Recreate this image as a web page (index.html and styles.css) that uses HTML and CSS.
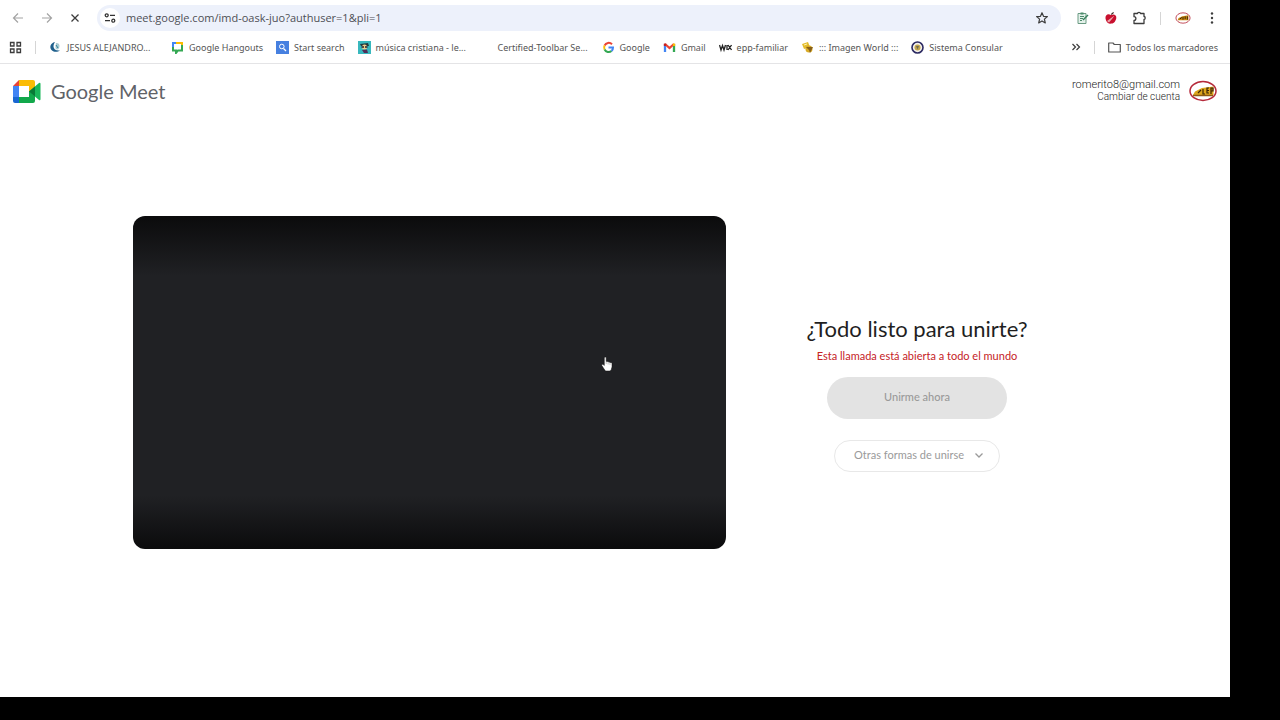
FILE: index.html
```html
<!DOCTYPE html>
<html lang="es">
<head>
    <meta charset="UTF-8">
    <meta name="viewport" content="width=device-width, initial-scale=1.0">
    <title>Google Meet</title>
    <link rel="stylesheet" href="styles.css">
</head>
<body>
    <div class="window">
        <div class="toolbar">
            <div class="nav-buttons">
                <button class="icon-btn faded" aria-label="Atrás">
                    <svg width="12" height="12" viewBox="0 0 12 12"><path d="M11 6H1.5M6 1.5L1.5 6L6 10.500" fill="none" stroke="currentColor" stroke-width="1.2"/></svg>
                </button>
                <button class="icon-btn faded" aria-label="Adelante">
                    <svg width="12" height="12" viewBox="0 0 12 12"><path d="M1 6H10.500M6 1.500L10.500 6L6 10.500" fill="none" stroke="currentColor" stroke-width="1.2"/></svg>
                </button>
                <button class="icon-btn" aria-label="Detener">
                    <svg width="10" height="10" viewBox="0 0 10 10"><path d="M1.500 1.500L8.500 8.500M8.500 1.500L1.500 8.500" fill="none" stroke="currentColor" stroke-width="1.300"/></svg>
                </button>
            </div>
            <div class="address">
                <button class="site-info" aria-label="Información del sitio">
                    <svg width="12" height="12" viewBox="0 0 12 12" fill="none" stroke="#333" stroke-width="1.300"><circle cx="2.700" cy="3.300" r="1.500"/><path d="M6 3.300H11M1 8.700H6"/><circle cx="9.300" cy="8.700" r="1.500"/></svg>
                </button>
                <input class="url" type="text" aria-label="Dirección" value="meet.google.com/imd-oask-juo?authuser=1&amp;pli=1">
                <button class="icon-btn" aria-label="Añadir a marcadores">
                    <svg width="14" height="14" viewBox="0 0 14 14"><path d="M7 1.700L8.500 5.300L12.400 5.600L9.400 8.100L10.300 11.900L7 9.900L3.700 11.900L4.600 8.100L1.600 5.600L5.500 5.300Z" fill="none" stroke="currentColor" stroke-width="1.200" stroke-linejoin="round"/></svg>
                </button>
            </div>
            <div class="extensions">
                <button class="icon-btn" aria-label="Lista">
                    <svg width="14" height="14" viewBox="0 0 14 14" fill="none"><path d="M2 2.500H10V12.500H2Z" fill="#e4f1ea" stroke="#6b9b83"/><path d="M4.500 1.500H7.500V3.500H4.500Z" fill="#4b8b6b"/><path d="M4 5.500H8M4 7.500H7M4 9.500H6" stroke="#4b8b6b"/><path d="M7 9L12 4" stroke="#39805c" stroke-width="1.500"/></svg>
                </button>
                <button class="icon-btn" aria-label="Manzana">
                    <svg width="14" height="14" viewBox="0 0 14 14"><path d="M7 4C4 2 1 4 1.500 7.500C2 11 4.500 13.500 7 12.500C10 13 12 9.500 12.300 7C12.600 4 10 2.500 7 4Z" fill="#c8102e"/><path d="M7 4Q7 1.500 10 1Q10 3 7 4Z" fill="#3d2b25"/><path d="M3 10L10.500 4.500L8 8L5 11.500Z" fill="#e9a5aa"/></svg>
                </button>
                <button class="icon-btn" aria-label="Extensiones">
                    <svg width="14" height="14" viewBox="0 0 14 14"><path d="M2 2.500H5.500A1.500 1.200 0 0 1 8.500 2.500H12V5.500A1.200 1.500 0 0 1 12 8.500V12.500H2V9.500A1.700 1.700 0 0 0 2 5.700Z" fill="none" stroke="currentColor" stroke-width="1.300" stroke-linejoin="round"/></svg>
                </button>
                <span class="divider"></span>
                <button class="icon-btn" aria-label="Perfil">
                    <svg width="16" height="12" viewBox="0 0 28 22"><ellipse cx="14" cy="11" rx="13" ry="9.500" fill="#fff" stroke="#b5293a" stroke-width="1.500"/><path d="M4 15L6 11L13 8L24 6V15Z" fill="#c98a12"/><path d="M8 13L12 10M14 9V14M18 8V13M22 8V14" stroke="#3a2406" stroke-width="1.800"/></svg>
                </button>
                <button class="icon-btn" aria-label="Menú">
                    <svg width="14" height="14" viewBox="0 0 14 14" fill="currentColor"><circle cx="7" cy="2.500" r="1.200"/><circle cx="7" cy="7" r="1.200"/><circle cx="7" cy="11.500" r="1.200"/></svg>
                </button>
            </div>
        </div>

        <nav class="bookmarks">
            <button class="icon-btn" aria-label="Aplicaciones">
                <svg width="13" height="13" viewBox="0 0 13 13" fill="none" stroke="currentColor" stroke-width="1.300"><path d="M1.500 1.500H5V5H1.500ZM8 1.500H11.500V5H8ZM1.500 8H5V11.500H1.500ZM8 8H11.500V11.500H8Z"/></svg>
            </button>
            <span class="divider"></span>
            <ul class="bookmark-list">
                <li><a class="bookmark" href="#">
                    <svg class="favicon" viewBox="0 0 13 13"><path d="M6 1C1 2 0 7 3 9.500C5 11.500 9 11 11 9.500C7 10 4.500 8 4.500 5.500C4.500 3 5.500 2 6 1Z" fill="#1e5f8c"/><path d="M7 2C10.500 1.500 11.500 5 9.500 8C8 9 6 8 6.500 6Z" fill="#a9cbd2"/><path d="M7 4L9 7" stroke="#2d7f9a"/></svg>
                    <span class="cut">JESUS ALEJANDRO...</span></a></li>
                <li><a class="bookmark" href="#">
                    <svg class="favicon" viewBox="0 0 13 13" fill="none" stroke-width="2"><path d="M2 10V2H6" stroke="#4285f4"/><path d="M5 2H11V5" stroke="#fbbc04"/><path d="M11 4V9.500H7L5 12V9.500H2V6" stroke="#34a853"/><path d="M2 6V2" stroke="#4285f4"/></svg>
                    <span>Google Hangouts</span></a></li>
                <li><a class="bookmark" href="#">
                    <svg class="favicon" viewBox="0 0 13 13"><rect width="13" height="13" fill="#4680e0"/><circle cx="5.800" cy="5.500" r="2.300" fill="none" stroke="#fff"/><path d="M7.500 7.500L10 10" stroke="#fff" stroke-width="1.300"/></svg>
                    <span>Start search</span></a></li>
                <li><a class="bookmark" href="#">
                    <svg class="favicon" viewBox="0 0 13 13"><rect width="13" height="13" fill="#38b8be"/><path d="M2 3L10 2L11 5L3 5Z" fill="#253a3e"/><circle cx="6.500" cy="6" r="2.500" fill="#f0cf8b"/><path d="M3.500 6H6M7 6H9.500" stroke="#26202d" stroke-width="1.500"/><path d="M4 9L9 8.500L10 12H6Z" fill="#512e58"/></svg>
                    <span class="cut">música cristiana - le...</span></a></li>
                <li><a class="bookmark" href="#">
                    <span class="favicon"></span>
                    <span class="cut">Certified-Toolbar Se...</span></a></li>
                <li><a class="bookmark" href="#">
                    <svg class="favicon" viewBox="0 0 13 13" fill="none" stroke-width="2"><path d="M10 3.300A4.500 4.500 0 0 0 2.600 4.500" stroke="#ea4335"/><path d="M2.600 4.500A4.500 4.500 0 0 0 2.600 8.500" stroke="#fbbc04"/><path d="M2.600 8.500A4.500 4.500 0 0 0 9.500 10" stroke="#34a853"/><path d="M9.500 10A4.500 4.500 0 0 0 11 6.500H6.500" stroke="#4285f4"/></svg>
                    <span>Google</span></a></li>
                <li><a class="bookmark" href="#">
                    <svg class="favicon" viewBox="0 0 13 13" fill="none" stroke-width="2.300"><path d="M2 11V3" stroke="#4285f4"/><path d="M11 11V3" stroke="#34a853"/><path d="M2 3L6.500 7L11 3" stroke="#ea4335"/><path d="M2 5V2.500" stroke="#c5221f"/><path d="M11 5V2.500" stroke="#fbbc04"/></svg>
                    <span>Gmail</span></a></li>
                <li><a class="bookmark" href="#">
                    <svg class="favicon" viewBox="0 0 13 13" fill="none" stroke="#222" stroke-width="1.300"><path d="M.500 4L2 9L3.500 4.500L5 9L6.500 4M8 4V9M9 4L12.500 9M12.500 4L9 9"/></svg>
                    <span>epp-familiar</span></a></li>
                <li><a class="bookmark" href="#">
                    <svg class="favicon" viewBox="0 0 13 13"><path d="M1 3L7 1L9 6L3 8Z" fill="#e3bd2f"/><circle cx="8" cy="8" r="3.500" fill="#d9ab26"/><path d="M5 6L12 6L9 12L8 9Z" fill="#876019"/><path d="M3 4L6 3" stroke="#fff3b0"/></svg>
                    <span>::: Imagen World :::</span></a></li>
                <li><a class="bookmark" href="#">
                    <svg class="favicon" viewBox="0 0 13 13"><circle cx="6.500" cy="6.500" r="5.500" fill="#f4f1ea" stroke="#2c2a62" stroke-width="1.600"/><circle cx="6.500" cy="6.500" r="3" fill="#c3a64b"/><path d="M5 5H8L6.500 8.500Z" fill="#6d6b56"/></svg>
                    <span>Sistema Consular</span></a></li>
            </ul>
            <button class="icon-btn" aria-label="Más marcadores">
                <svg width="10" height="10" viewBox="0 0 10 10"><path d="M1.500 2L4.500 5L1.500 8M5.500 2L8.500 5L5.500 8" fill="none" stroke="currentColor" stroke-width="1.200"/></svg>
            </button>
            <span class="divider"></span>
            <a class="bookmark" href="#">
                <svg class="favicon" viewBox="0 0 13 13"><path d="M.700 2H5L6.300 3.500H12.300V11H.700Z" fill="none" stroke="#555" stroke-width="1.200" stroke-linejoin="round"/></svg>
                <span>Todos los marcadores</span>
            </a>
        </nav>

        <header class="meet-header">
            <a class="brand" href="#">
                <svg width="28" height="23" viewBox="0 0 28 23"><path d="M0 6L6 0V6Z" fill="#ea4335"/><path d="M0 6H6V17H0Z" fill="#4285f4"/><path d="M0 17H6V23H2Q0 23 0 21Z" fill="#1967d2"/><path d="M6 0H20Q22 0 22 2V9L16 12V6H6Z" fill="#fbbc04"/><path d="M6 17H16V11H22V21Q22 23 20 23H6Z" fill="#12a84b"/><path d="M16 11.500L26 3Q27.500 2 27.500 4V19Q27.500 21 26 20Z" fill="#1bb75a"/><path d="M16 11.500L22 6.500V16.500Z" fill="#087a36"/></svg>
                <span>Google Meet</span>
            </a>
            <div class="account">
                <div class="account-text">
                    <div class="email">romerito8@gmail.com</div>
                    <a class="switch" href="#">Cambiar de cuenta</a>
                </div>
                <svg width="28" height="22" viewBox="0 0 28 22"><ellipse cx="14" cy="11" rx="13" ry="9.500" fill="#fff" stroke="#b5293a" stroke-width="1.500"/><path d="M4 15L6 11.500L13 8L24.500 6.500V15Z" fill="#dba51b"/><path d="M4 15.500H24" stroke="#8c5a14" stroke-width="1.500"/><path d="M9 13L12 10M14 9V14H16M20 8H18V13H20M18 10.500H20M22 14V8H24V11H22" fill="none" stroke="#3a2406" stroke-width="1.200"/></svg>
            </div>
        </header>

        <main class="lobby">
            <div class="preview">
                <svg class="pointer" width="12" height="16" viewBox="0 0 12 16"><path d="M3.300 1.500Q4.300 .500 5.200 1.500V5.500Q6.300 5 7 6Q8.200 5.500 8.800 6.500Q10.500 6 11 7.500V11Q10.500 14 9 15H4.500Q3 13 .800 9.500Q.500 8 2 8.300L3.300 9.500Z" fill="#fff" stroke="#111" stroke-width=".5"/><path d="M5.200 6V8M7.100 6.500V8.500M9 7V9" stroke="#888" stroke-width=".5"/></svg>
            </div>
            <section class="join">
                <h1>¿Todo listo para unirte?</h1>
                <p class="warning">Esta llamada está abierta a todo el mundo</p>
                <button class="join-now" disabled>Unirme ahora</button>
                <button class="other-ways" disabled>
                    Otras formas de unirse
                    <svg width="10" height="10" viewBox="0 0 10 10"><path d="M1.500 3.500L5 7L8.500 3.500" fill="none" stroke="currentColor" stroke-width="1.300"/></svg>
                </button>
            </section>
        </main>
    </div>
</body>
</html>
```
FILE: styles.css
```css
* {
    box-sizing: border-box;
}

body {
    margin: 0;
    padding: 0 50px 23px 0;
    min-height: 100vh;
    display: flex;
    background-color: #000;
    font-family: Lato, sans-serif;
}

button {
    border: none;
    padding: 0;
    background: none;
    font-family: inherit;
}

a {
    color: inherit;
    text-decoration: none;
}

svg {
    display: block;
    flex-shrink: 0;
}

.window {
    flex: 1;
    min-width: 0;
    display: flex;
    flex-direction: column;
    background-color: #fff;
}

/* browser toolbar */
.toolbar {
    display: flex;
    align-items: center;
    height: 36px;
    padding: 0 11px 0 12px;
}

.nav-buttons {
    display: flex;
    align-items: center;
    gap: 17px;
    margin-right: 17px;
}

.icon-btn {
    display: flex;
    color: #3c3c3c;
}

.faded {
    color: #a3a3a3;
}

.address {
    flex: 1;
    display: flex;
    align-items: center;
    height: 26px;
    padding: 0 12px 0 3px;
    border-radius: 13px;
    background-color: #edf1fb;
}

.site-info {
    display: flex;
    align-items: center;
    justify-content: center;
    width: 20px;
    height: 20px;
    border-radius: 50%;
    background-color: #fff;
}

.url {
    flex: 1;
    border: none;
    padding: 0 0 1px;
    margin-left: 6px;
    background: none;
    outline: none;
    color: #4d4f55;
    font-family: "Open Sans", sans-serif;
    font-size: 11px;
}

.extensions {
    display: flex;
    align-items: center;
    gap: 14px;
    margin-left: 15px;
}

.divider {
    width: 1px;
    height: 13px;
    background-color: #d5d5d5;
}

/* bookmarks bar */
.bookmarks {
    display: flex;
    align-items: center;
    gap: 13px;
    height: 28px;
    padding: 0 12px 5px 9px;
    border-bottom: 1px solid #e4e4e6;
    color: #555;
    font-family: "Noto Sans", sans-serif;
    font-size: 9px;
}

.bookmark-list {
    flex: 1;
    display: flex;
    gap: 13px;
    margin: 0;
    padding: 0;
    list-style-type: none;
}

.bookmark {
    display: flex;
    align-items: center;
    gap: 5px;
    white-space: nowrap;
}

.favicon {
    width: 13px;
    height: 13px;
}

.cut {
    width: 91px;
}

/* meet page */
.meet-header {
    display: flex;
    align-items: center;
    justify-content: space-between;
    height: 54px;
    padding: 0 13px;
}

.brand {
    display: flex;
    align-items: center;
    gap: 10px;
    color: #5f6368;
    font-size: 20px;
}

.account {
    display: flex;
    align-items: center;
    gap: 9px;
    color: #222;
    font-family: Roboto, sans-serif;
    font-weight: 300;
    text-align: right;
}

.email {
    font-size: 11px;
    line-height: 12px;
}

.switch {
    display: block;
    font-size: 10px;
    line-height: 12px;
}

.lobby {
    flex: 1;
    display: flex;
    align-items: center;
    padding: 0 122px 50px 133px;
}

.preview {
    position: relative;
    flex: 1;
    aspect-ratio: 16 / 9;
    border-radius: 12px;
    background: linear-gradient(#0b0b0c, #202124 18%, #202124 84%, #0b0b0c);
}

.pointer {
    position: absolute;
    left: 79%;
    top: 42%;
}

.join {
    width: 382px;
    padding-top: 22px;
    display: flex;
    flex-direction: column;
    align-items: center;
}

h1 {
    margin: 0;
    color: #1f1f1f;
    font-size: 22px;
    font-weight: 400;
    line-height: 26px;
}

.warning {
    margin: 6px 0 13px;
    color: #c5221f;
    font-size: 11px;
    line-height: 16px;
}

.join-now {
    width: 180px;
    height: 42px;
    margin-bottom: 21px;
    padding-bottom: 2px;
    border-radius: 21px;
    background-color: #e3e3e3;
    color: #9a9a9a;
    font-size: 11px;
    font-weight: 500;
}

.other-ways {
    display: flex;
    align-items: center;
    gap: 10px;
    height: 32px;
    padding: 0 15px 2px 19px;
    border: 1px solid #e8e8e8;
    border-radius: 16px;
    color: #9a9a9a;
    font-size: 11px;
}
```
